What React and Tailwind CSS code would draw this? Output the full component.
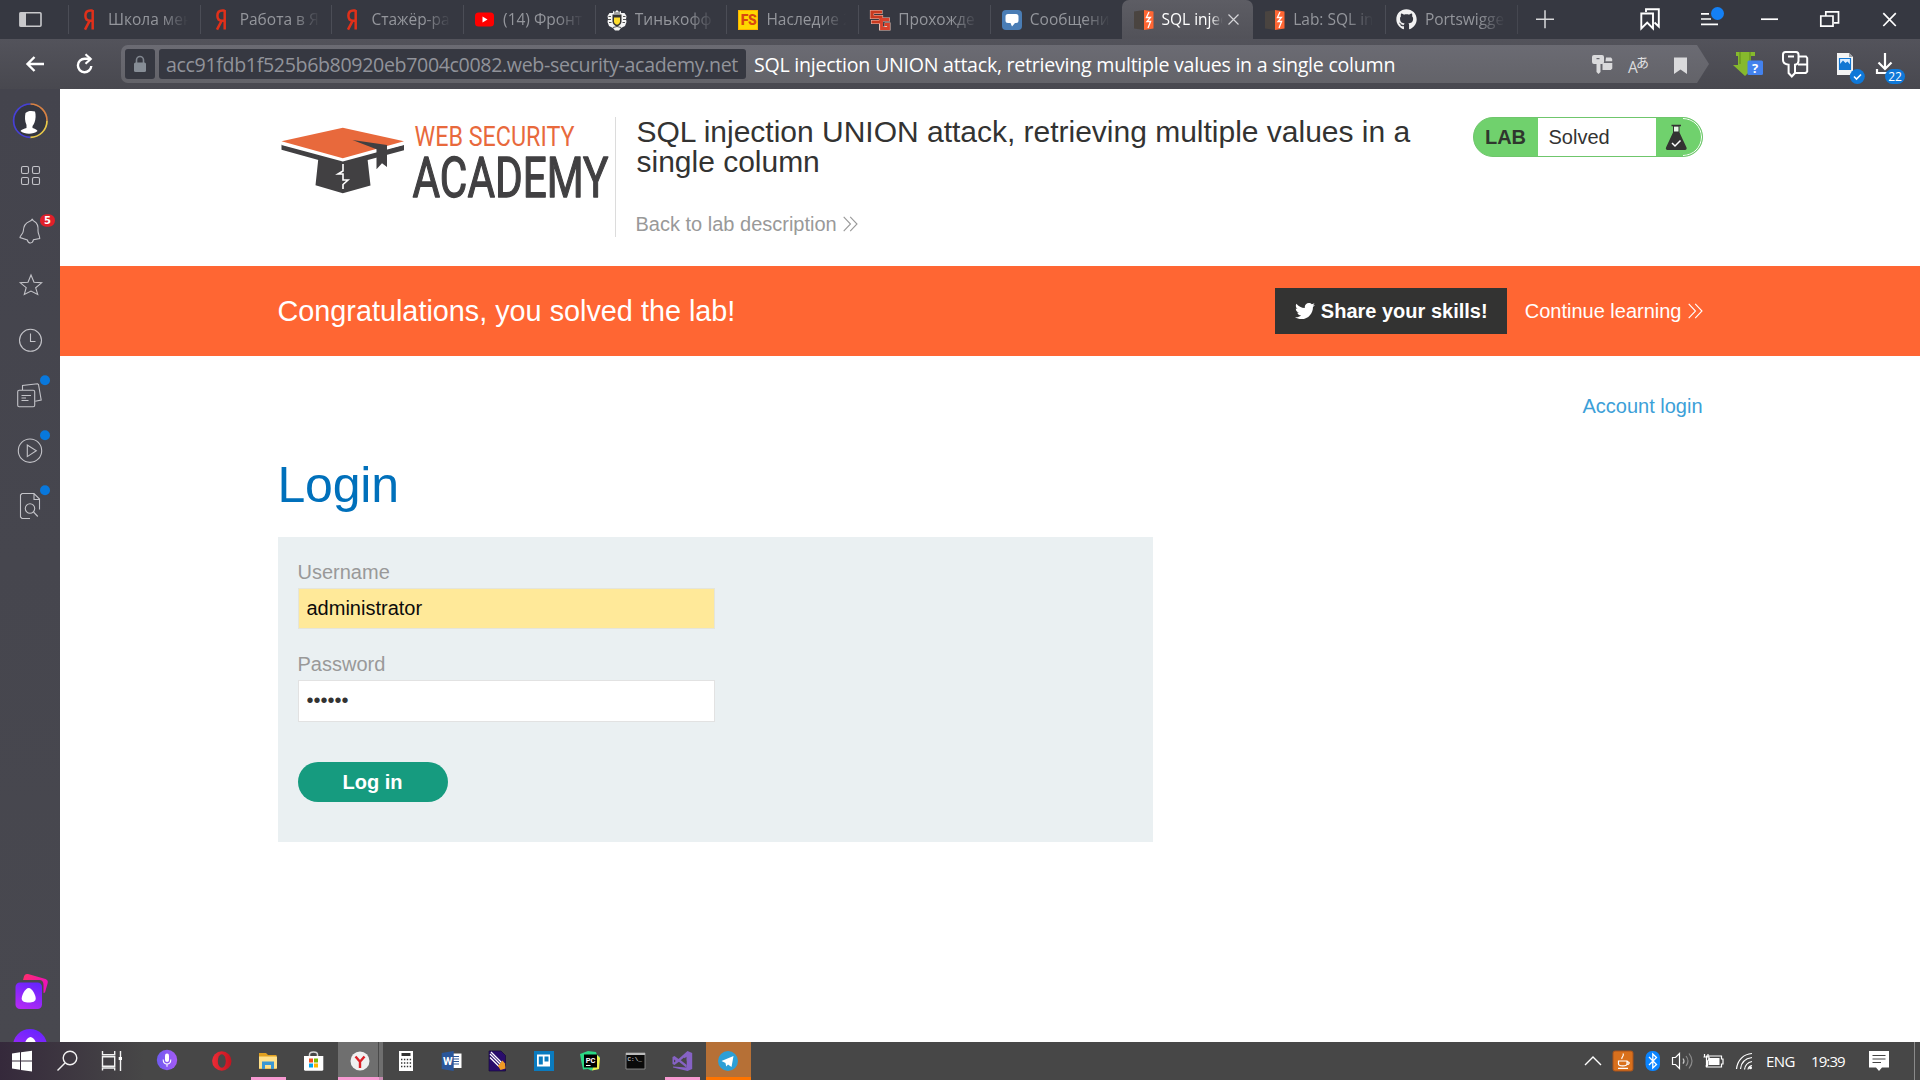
import React from "react";
import { FaTwitter, FaGithub } from "react-icons/fa";

/* ---------- tab icons ---------- */

const Ya = () => (
  <svg width="22" height="22" viewBox="0 0 22 22" fill="none" stroke="#e0301a" strokeWidth="2.5">
    <path d="M13.700 1v19.600M13.700 1.600h-2.300C8.300 1.600 6.400 3.600 6.400 6.800s1.900 5 4.600 5h2.700M10.600 11.800 6 20.600" />
  </svg>
);

const YouTube = () => (
  <svg width="22" height="22" viewBox="0 0 22 22">
    <rect x="1" y="3.5" width="19" height="14" rx="3.5" fill="#f00" />
    <path d="M8.5 7.5v6l5-3z" fill="#fff" />
  </svg>
);

const Tinkoff = () => (
  <svg width="22" height="22" viewBox="0 0 22 22">
    <path d="M7 2l2 1 2-2 2 2 2-1v2h3.500l2 3-.5 3 .5 3-1.500 4-4 2-2 2.500h-4L7 19l-4-2-1.500-4 .5-3-.5-3 2-3H7z" fill="#f4f4f4" />
    <path d="M2.500 7.500h2.500M2 10.500h3M3 13.500h2.500M17 7.500h2.500M17 10.500h3M16.500 13.500H19M7 18.500l4-1 4 1M8 4h6" stroke="#555" strokeWidth="1" fill="none" />
    <path d="M6.500 5.500h9v7c0 2.500-2 4-4.500 5-2.500-1-4.500-2.500-4.500-5z" fill="#333" />
    <path d="M8 8.500h6v4c0 1.500-1.200 2.500-3 3.300-1.800-.8-3-1.800-3-3.300z" fill="#ffdd2d" />
  </svg>
);

const FS = () => (
  <div className="flex h-5 w-5 items-center justify-center border border-[#ffb400] bg-[#ffd800] font-['Roboto',sans-serif] text-[14px] leading-none font-black tracking-[-0.5px] text-[#d9480f]">
    FS
  </div>
);

const SG = () => (
  <svg width="22" height="22" viewBox="0 0 22 22" fill="none">
    <path d="M13.500 3H3v5h9v5H2" stroke="#e9c4b8" strokeWidth="4.200" />
    <path d="M21 10.500h-9v9h7.500v-4h-4" stroke="#e9c4b8" strokeWidth="4" />
    <path d="M13 3H3v5h9v5H2.500" stroke="#c8391f" strokeWidth="3.200" />
    <path d="M20.500 10.500h-8v9h7v-4h-4" stroke="#d8402a" strokeWidth="2.800" />
  </svg>
);

const Messages = () => (
  <svg width="22" height="22" viewBox="0 0 22 22">
    <rect x="1" y="1" width="20" height="20" rx="4" fill="#4a7db5" />
    <path d="M7 5h8a2.500 2.500 0 0 1 2.500 2.500v4A2.500 2.500 0 0 1 15 14h-1l-3 3.500L9.500 14H7a2.500 2.500 0 0 1-2.500-2.500v-4A2.500 2.500 0 0 1 7 5z" fill="#fff" />
  </svg>
);

const Burp = () => (
  <svg width="22" height="22" viewBox="0 0 22 22">
    <path d="M1 2.500 11 1v20L1 19.500z" fill="#4a4440" />
    <path d="M11 1l9.500 1.500v17L11 21z" fill="#ff6633" />
    <path d="M16 3l-2.600 5.500h4L14 12.500h3.600L15 19" fill="none" stroke="#fff" strokeWidth="1.300" />
  </svg>
);

const TABS = [
  { label: "Школа мен", icon: <Ya /> },
  { label: "Работа в Я", icon: <Ya /> },
  { label: "Стажёр-ра", icon: <Ya /> },
  { label: "(14) Фронт", icon: <YouTube /> },
  { label: "Тинькофф", icon: <Tinkoff /> },
  { label: "Наследие 2", icon: <FS /> },
  { label: "Прохожде", icon: <SG /> },
  { label: "Сообщени", icon: <Messages /> },
  { label: "SQL injec", icon: <Burp />, active: true },
  { label: "Lab: SQL in", icon: <Burp /> },
  { label: "Portswigge", icon: <FaGithub size={21} color="#f2f2f2" /> },
];

function Tab({ tab, next }) {
  if (tab.active) {
    return (
      <div className="flex h-[39px] w-[131.7px] shrink-0 items-center rounded-t-[7px] bg-linear-to-b from-[#5d5d64] to-[#525259] pl-[11px]">
        <div className="flex w-[22px] justify-center">{tab.icon}</div>
        <div className="ml-[7px] w-[62px] overflow-hidden text-[15.500px] whitespace-nowrap text-white [mask-image:linear-gradient(to_right,black_78%,transparent_98%)]">
          {tab.label}
        </div>
        <svg className="ml-[4px] shrink-0" width="11" height="11" viewBox="0 0 11 11" stroke="#d5d5d8" strokeWidth="1.200">
          <path d="M.5.5l10 10M10.500.5l-10 10" />
        </svg>
      </div>
    );
  }
  return (
    <div className="flex h-[39px] w-[131.7px] shrink-0 items-center">
      <div className={next ? "h-[29px] w-px" : "h-[29px] w-px bg-[#4b4d56]"} />
      <div className="ml-[10px] flex w-[22px] justify-center">{tab.icon}</div>
      <div className="ml-[7px] w-[82px] overflow-hidden text-[15.500px] whitespace-nowrap text-[#94969c] [mask-image:linear-gradient(to_right,black_65%,transparent_98%)]">
        {tab.label}
      </div>
    </div>
  );
}

function TabBar() {
  return (
    <div className="flex h-[39px] bg-[#363841]">
      <svg className="shrink-0" width="68" height="39" viewBox="0 0 68 39">
        <rect x="20" y="12.800" width="21" height="13.500" rx="1" fill="none" stroke="#c9c9cc" strokeWidth="1.600" />
        <rect x="19.500" y="12.500" width="6.500" height="14" fill="#c9c9cc" />
      </svg>
      {TABS.map((t, i) => (
        <Tab key={t.label} tab={t} next={i > 0 && TABS[i - 1].active} />
      ))}
      <svg className="shrink-0" width="403" height="39" viewBox="1517 0 403 39" fill="none" stroke="#fff" strokeWidth="1.700">
        <path d="M1517 5v29" stroke="#4b4d56" strokeWidth="1.500" />
        <path d="M1536 19.200h18M1545 10.200v18" stroke="#d8d8da" strokeWidth="1.500" />
        <path d="M1646 12V9.300h12.800v17.200l-4.300-4" strokeWidth="1.900" />
        <path d="M1641.300 13.500h11.700v15l-5.800-6-5.900 6z" strokeWidth="1.900" />
        <path d="M1701 13.800h8M1701 19h10M1701 24.300h17" />
        <circle cx="1717.500" cy="13.500" r="6.500" fill="#1480f5" stroke="none" />
        <path d="M1761 19.200h17" />
        <path d="M1825.800 15.500v-3.700h12.700v11h-4.500M1820.800 16h12.200v10.200h-12.200z" />
        <path d="M1883.300 13.200l12.500 12.800M1895.800 13.200l-12.500 12.800" />
      </svg>
    </div>
  );
}

/* ---------- toolbar ---------- */

function Toolbar() {
  return (
    <div className="flex h-[50px] items-start bg-linear-to-b from-[#53535b] to-[#48484f]">
      <svg className="shrink-0" width="121" height="50" viewBox="0 39 121 50" fill="none" stroke="#fff" strokeWidth="2.400">
        <path d="M27.500 64H44M34.500 57l-7 7 7 7" />
        <path d="M91.300 66a6.700 6.700 0 1 1-6.700-7.200h6" />
        <path d="M85.500 54.300l5.200 4.700-5.200 4.800" strokeWidth="2.200" />
      </svg>
      <div className="mt-[6px] flex h-[38px] w-[1576px] shrink-0 items-center rounded-l-[7px] bg-linear-to-b from-[#6b6b73] to-[#636369] pl-1">
        <div className="flex h-[30px] w-[30px] items-center justify-center rounded-[3px] bg-[#363841]">
          <svg width="14" height="18" viewBox="0 0 14 18">
            <path d="M3.500 8V5a3.500 3.500 0 0 1 7 0v3" fill="none" stroke="#80868f" strokeWidth="1.600" />
            <rect x="1" y="7.500" width="12" height="9.500" rx="1.500" fill="#868d96" />
          </svg>
        </div>
        <div className="ml-1 flex h-[30px] w-[587px] items-center rounded-[3px] bg-[#363841] pt-[2px] pl-[7px] text-[19.600px] tracking-[-0.350px] whitespace-nowrap text-[#91939a]">
          acc91fdb1f525b6b80920eb7004c0082.web-security-academy.net
        </div>
        <div className="ml-2 pt-[2px] text-[19.600px] tracking-[-0.250px] whitespace-nowrap text-white">
          SQL injection UNION attack, retrieving multiple values in a single column
        </div>
      </div>
      <svg className="-ml-[117px] mt-[6px] shrink-0" width="129" height="38" viewBox="1580 45 129 38">
        <defs>
          <linearGradient id="bar" x1="0" y1="0" x2="0" y2="1">
            <stop offset="0" stopColor="#6b6b73" />
            <stop offset="1" stopColor="#636369" />
          </linearGradient>
        </defs>
        <path d="M1696.500 45h.5l12 19-12 19h-.5z" fill="url(#bar)" />
        <g fill="#dadadc">
          <path d="M1594 55h8a2 2 0 0 1 2 2v5a2 2 0 0 1-2 2h-1.500v8l-2 2-2-2v-8h-2.500a2 2 0 0 1-2-2v-5a2 2 0 0 1 2-2z" />
          <path d="M1606 57.500h5l1.200 1.500v2.300h-6.700zM1602.500 63h9.800v5.500l-1.500 1.500h-8.300z" />
          <path d="M1596.500 58h3v1.200h-3z" fill="#66666d" />
          <path d="M1674 57.500h13v16.500l-6.500-4.500-6.500 4.500z" />
        </g>
        <text x="1628" y="73.300" fontSize="15.500" fontFamily="Open Sans, sans-serif" fill="#dadadc">A</text>
        <text x="1636" y="66.500" fontSize="13" fontFamily="Noto Sans CJK JP, sans-serif" fill="#e2e2e4">あ</text>
      </svg>
      <svg className="shrink-0" width="211" height="50" viewBox="1709 39 211 50" fill="none">
        <path d="M1736 52h19v4h-4v9h5l-11 11-12-11h5v-9h-2z" fill="#86b92d" />
        <path d="M1740 52v12M1750 52v10" stroke="#5f8b1b" strokeWidth="1" />
        <rect x="1747.500" y="60.500" width="15.500" height="14.500" rx="1.500" fill="#4382ee" />
        <text x="1755.200" y="73" textAnchor="middle" fontSize="13" fontWeight="700" fontFamily="Open Sans, sans-serif" fill="#fff">?</text>
        <g stroke="#fff" strokeWidth="2">
          <path d="M1785.500 52h10.500a2.500 2.500 0 0 1 2.500 2.500v6.500a4 4 0 0 1-3.500 3.700V73l-3.200 3.500-3.200-3.500v-8.300c-3.500-.4-5.600-1.700-5.600-4.700v-5.500a2.500 2.500 0 0 1 2.500-2.500z" />
          <path d="M1788 56.500h6" />
          <path d="M1798.500 56.500h7.500l1.200 1.500v13.500l-1.500 1.500H1795M1798 64.500h9" />
        </g>
        <path d="M1837 53h12l4 4v18h-16z" fill="#f4f4f4" />
        <path d="M1849 53l4 4h-4z" fill="#9fa3a8" />
        <rect x="1839.500" y="58.500" width="11" height="11" fill="#d9ecff" />
        <path d="M1839.500 69.500v-5l3.500-4 2.500 2.500 2-1.500 3 3.500v4.500z" fill="#1277d3" />
        <path d="M1839.500 58.500h11v11h-11z" stroke="#1277d3" strokeWidth="1.200" />
        <circle cx="1857.300" cy="76.500" r="7.500" fill="#0f78d8" />
        <path d="M1854 76.500l2.500 2.500 4.500-4.500" stroke="#fff" strokeWidth="1.600" />
        <path d="M1885 53v15M1878.500 62.500l6.500 6.500 6.500-6.500" stroke="#fff" strokeWidth="2.200" />
        <path d="M1877 69v4h11" stroke="#fff" strokeWidth="2.200" />
        <rect x="1885" y="69" width="20" height="15" rx="7.500" fill="#0f78d8" />
        <text x="1895" y="80.700" textAnchor="middle" fontSize="12" fontFamily="Open Sans, sans-serif" fill="#fff">22</text>
      </svg>
    </div>
  );
}

/* ---------- side rail ---------- */

const dot = (cy) => <circle cx="45" cy={cy} r="5" fill="#0878dc" stroke="none" />;

const RAIL = [
  <g key="avatar" strokeWidth="1.700">
    <circle cx="30.300" cy="120.700" r="16" fill="#343640" stroke="none" />
    <path d="M30.300 104a16.700 16.700 0 0 1 16.700 16.700" stroke="#d98243" />
    <path d="M47 120.700a16.700 16.700 0 0 1-16.700 16.700" stroke="#e8c94a" />
    <path d="M30.300 137.400a16.700 16.700 0 0 1 0-33.400" stroke="#4640d6" />
    <path d="M25.500 113c2-2.500 7-2.500 9.500-1.500 1 3 .8 8-.5 11-.7 1.800-1.500 3-2 3.500v2c2 .8 4.500 1.500 5 3-4 3.500-13 3.500-17 0 .8-1.600 4-2.200 6-3v-3c-1.800-4-1.800-8-1-12z" fill="#fff" stroke="none" />
  </g>,
  <g key="apps">
    <rect x="21.500" y="166.500" width="7" height="7" rx="1.500" />
    <rect x="32.500" y="166.500" width="7" height="7" rx="1.500" />
    <rect x="21.500" y="177.500" width="7" height="7" rx="1.500" />
    <rect x="32.500" y="177.500" width="7" height="7" rx="1.500" />
  </g>,
  <g key="bell">
    <path d="M32.500 218.800c-.3 1.600.6 2 2 2.700 3.200 1.800 3.800 5 3.500 9 0 3.500 1.600 4.500 1.700 8l-6.200 1.200c-.8 4-5 4.500-6.200.3l-7.300-2.500c0-2.500 3-3 3.300-6.500.3-4.500 1.700-8 6-9.500 1.700-.4 2.500-1.200 3.200-2.700z" />
    <rect x="40" y="214.200" width="15" height="12.500" rx="6.200" fill="#e0202a" stroke="none" />
    <text x="47.500" y="224.200" textAnchor="middle" fontSize="10" fontWeight="700" fontFamily="DejaVu Sans, sans-serif" fill="#fff" stroke="none">5</text>
  </g>,
  <path key="star" d="M31 275l3 7.300 7.600.5-5.900 5 2 6.600-6.700-3.400-6.700 3.400 1.900-6.700-5.900-4.900 7.700-.5z" />,
  <g key="clock">
    <circle cx="30.500" cy="340.300" r="11" />
    <path d="M30.500 333.500v8h5" />
  </g>,
  <g key="notes">
    <rect x="17.700" y="390.200" width="17" height="16.500" rx="1.500" />
    <path d="M22.500 390v-4.500l15-1.800 1 .8 2.700 15.500-6 1.300M21.500 395.500h9.500M21.500 398h4.500M21.500 400.500h7" />
    {dot(380.300)}
  </g>,
  <g key="play">
    <circle cx="30" cy="450.700" r="11.700" />
    <path d="M27.300 445v11.600l9-5.800z" />
    {dot(435.300)}
  </g>,
  <g key="search">
    <path d="M30 518.500h-8l-1.500-1.500v-22l1.500-1.500h12l5.500 5.500v10.500M34 493.500v6h5.500" />
    <circle cx="30" cy="508.500" r="4.700" />
    <path d="M33.500 512l4.300 4.500" />
    {dot(490.300)}
  </g>,
];

const RAIL_VIEW = ["0 93 60 55", "0 148 60 55", "0 203 60 55", "0 258 60 55", "0 313 60 55", "0 368 60 55", "0 423 60 55", "0 478 60 55"];

function SideRail() {
  return (
    <div className="flex w-[60px] shrink-0 flex-col bg-linear-to-b from-[#44444d] to-[#48484f] pt-[4px]">
      {RAIL.map((g, i) => (
        <svg key={i} className="shrink-0" width="60" height="55" viewBox={RAIL_VIEW[i]} fill="none" stroke="#c3c3c8" strokeWidth="1.100">
          {g}
        </svg>
      ))}
      <svg className="mt-auto shrink-0" width="60" height="82" viewBox="0 960 60 82">
        <defs>
          <linearGradient id="alice" x1="0.800" y1="0" x2="0.400" y2="1">
            <stop offset="0" stopColor="#6424ff" />
            <stop offset="1" stopColor="#b02af5" />
          </linearGradient>
          <linearGradient id="card" x1="0" y1="0" x2="1" y2="0.300">
            <stop offset="0" stopColor="#ff2f68" />
            <stop offset="1" stopColor="#ee10b8" />
          </linearGradient>
        </defs>
        <path d="M23 980l1-3.500c.6-2 2-3 4-2.400l17.500 5c1.800.7 2.700 2 2.200 4l-2.700 9.500-1.500.4v-8c0-3.500-1.500-5-4-5z" fill="url(#card)" />
        <rect x="15.500" y="982.500" width="26.500" height="26.500" rx="4.500" fill="url(#alice)" />
        <path d="M28.700 988c3.500 0 7 7 7 10.500 0 3-3 4-7 4s-7-1-7-4c0-3.500 3.500-10.500 7-10.500z" fill="#fff" />
        <circle cx="30" cy="1046" r="17" fill="url(#alice)" />
        <path d="M30.500 1037c3 0 6 5 6 9h-12c0-4 3-9 6-9z" fill="#fff" />
      </svg>
    </div>
  );
}

/* ---------- page ---------- */

const Chevrons = ({ color }) => (
  <svg className="shrink-0" width="15" height="16" viewBox="0 0 15 16" fill="none" stroke={color} strokeWidth="1.100">
    <path d="M.7.8 7.500 8 .7 15.200M7.200.8 14 8l-6.800 7.200" />
  </svg>
);

const Logo = () => (
  <svg className="shrink-0" width="337" height="120" viewBox="278 117 337 120" role="img" aria-label="Web Security Academy">
    <path d="M281.500 144.500v5.200l61.300 17 61.200-16.500v-5.500l-61.200 15z" fill="#414042" />
    <path d="M318.500 157l24.300 4.500 24.500-4.500 3.200 28.500-27.700 7.800-27.300-8z" fill="#414042" />
    <path d="M281.500 145l61.300 16.500L404 145v-3l-61.200 14-61.300-14z" fill="#fff" />
    <path d="M281.500 141.200l61.300-13.500 61.200 13.500-61.200 17z" fill="#e8693c" />
    <path d="M352.500 140l34.500 5v22l-5-3.700-5.500 6v-20z" fill="#414042" />
    <path d="M343 164v7l-5 3h5v6l5 0-5 4.500v4.500" fill="none" stroke="#fff" strokeWidth="1.600" />
    <text x="414.500" y="146" fontSize="28" fontWeight="400" fontFamily="Roboto, sans-serif" fill="#e8693c" strokeLinejoin="round" textLength="160" lengthAdjust="spacingAndGlyphs">WEB SECURITY</text>
    <text x="412.500" y="196.500" fontSize="55" fontWeight="400" fontFamily="Roboto, sans-serif" fill="#414042" stroke="#414042" strokeWidth="1.300" strokeLinejoin="round" textLength="196" lengthAdjust="spacingAndGlyphs">ACADEMY</text>
  </svg>
);

function LabHeader() {
  return (
    <div className="h-[177px] bg-white">
      <div className="mx-auto flex w-[1425px] pt-[28px]">
        <Logo />
        <div className="h-[120px] w-px bg-[#dcdcdc]" />
        <div className="ml-[20px] w-[790px]">
          <h2 className="pl-px text-[30px] leading-[30px] tracking-[-0.010px] text-[#333332]">
            SQL injection UNION attack, retrieving multiple values in a<br />single column
          </h2>
          <a className="mt-[35px] flex items-center gap-[6px] text-[20px] leading-6 text-[#999]">
            Back to lab description
            <Chevrons color="#999" />
          </a>
        </div>
        <div className="ml-auto flex h-10 w-[230px] overflow-hidden rounded-full border border-[#6fc66c] bg-[#70d16d]">
          <div className="flex w-16 items-center justify-center text-[20px] font-bold text-[#2f372d]">LAB</div>
          <div className="flex w-[118px] items-center bg-white pl-[11px] text-[20px] text-[#333332]">Solved</div>
          <svg width="46" height="38" viewBox="1656 118 46 38">
            <path d="M1683 118.500a18.500 18.500 0 0 1 0 37" fill="none" stroke="#fff" strokeWidth="1" />
            <path d="M1673 126h6.500v6.500l7 15c.5 1.500-.2 2.500-1.500 2.500h-17.500c-1.300 0-2-1-1.500-2.500l7-15z" fill="#333332" />
            <path d="M1674 126.500h4.500v5h-4.500z" fill="#e6f7e5" />
            <path d="M1671.500 125.500h9.500" stroke="#333332" strokeWidth="1.300" />
            <path d="M1672 143l3 3 5.500-5.500" fill="none" stroke="#fff" strokeWidth="1.500" />
          </svg>
        </div>
      </div>
    </div>
  );
}

function Banner() {
  return (
    <div className="h-[90px] bg-[#ff6633]">
      <div className="mx-auto flex h-full w-[1425px] items-center text-white">
        <p className="pt-[2px] text-[28.800px]">Congratulations, you solved the lab!</p>
        <button className="ml-auto flex h-[46px] w-[232px] items-center justify-center gap-[6px] bg-[#333332] pl-px text-[20px] font-bold">
          <FaTwitter size={20} />
          <span>Share your skills!</span>
        </button>
        <a className="ml-[18px] flex items-center gap-[6px] text-[20px]">
          Continue learning
          <Chevrons color="#ffffff" />
        </a>
      </div>
    </div>
  );
}

function LoginSection() {
  return (
    <div className="mx-auto w-[1425px] pt-[38px]">
      <div className="text-right text-[20px] leading-6 text-[#3ca0d8]">Account login</div>
      <h1 className="mt-[37px] text-[50px] leading-[60px] tracking-[-0.200px] text-[#0070bb]">Login</h1>
      <form className="mt-[22px] flex h-[305px] w-[875px] flex-col items-start bg-[#eaf0f2] px-5 pt-[23px] text-[20px]">
        <label className="leading-6 text-[#999]">Username</label>
        <input readOnly type="text" defaultValue="administrator" className="mt-1 h-[41px] w-[417px] border border-[#e5e5da] bg-[#ffe999] px-2 text-[#0b0b0b] outline-none" />
        <label className="mt-[23px] leading-6 text-[#999]">Password</label>
        <input readOnly type="password" defaultValue="secret" className="mt-1 h-[42px] w-[417px] border border-[#e2e2e2] bg-white px-2 pb-px text-[#333332] outline-none" />
        <button type="button" className="mt-10 h-10 w-[150px] rounded-full bg-[#169b7f] font-bold text-white">Log in</button>
      </form>
    </div>
  );
}

/* ---------- taskbar ---------- */

const PINK = "#f799d1";

function Taskbar() {
  return (
    <div className="flex h-[38px] shrink-0 bg-[#474747]">
      <svg className="shrink-0" width="144" height="38" viewBox="0 1042 144 38">
        <defs>
          <linearGradient id="edge">
            <stop offset="0" stopColor="#35293b" />
            <stop offset="1" stopColor="#474747" />
          </linearGradient>
        </defs>
        <rect x="0" y="1042" width="144" height="38" fill="url(#edge)" />
        <path d="M12 1053.500l8-1.200v8.200h-8zM21 1052.200l11-1.500v9.800H21zM12 1061.500h8v8.200l-8-1.200zM21 1061.500h11v10l-11-1.600z" fill="#fff" />
        <g fill="none" stroke="#f2f2f2" strokeWidth="1.400">
          <circle cx="70" cy="1058" r="6.800" />
          <path d="M65 1063l-7.500 7.500" />
          <path d="M102.500 1051v3.700h12.200V1051M102.500 1056.700h12.200v9.600h-12.200zM102.500 1070.500v-2.500h12.200v2.500M120.500 1051v20" />
        </g>
        <path d="M118.700 1057h3.300v3h-3.300z" fill="#fff" />
      </svg>
      <svg className="shrink-0" width="107" height="38" viewBox="144 1042 107 38">
        <defs>
          <linearGradient id="mic"><stop offset="0" stopColor="#6f5bf0" /><stop offset="1" stopColor="#a55bf5" /></linearGradient>
          <linearGradient id="opera"><stop offset="0" stopColor="#ee2c36" /><stop offset="1" stopColor="#c31420" /></linearGradient>
        </defs>
        <circle cx="167" cy="1060" r="10.200" fill="url(#mic)" />
        <rect x="165" y="1053.500" width="4" height="8.500" rx="2" fill="#fff" />
        <path d="M163.200 1059.500c0 6 7.600 6 7.600 0M167 1064v2.700" fill="none" stroke="#fff" strokeWidth="1.100" />
        <circle cx="221.800" cy="1061" r="9.700" fill="url(#opera)" />
        <ellipse cx="221.800" cy="1061" rx="4" ry="6.700" fill="#474747" />
      </svg>
      <svg className="shrink-0" width="87" height="38" viewBox="251 1042 87 38">
        <path d="M259 1053h7l2 2h8.500v14H259z" fill="#e0a020" />
        <path d="M259 1056.500h18v12h-18z" fill="#ffe08a" />
        <path d="M262 1069v-7.500h12v7.500h-3v-4h-6v4z" fill="#3b97d3" />
        <rect x="251" y="1077" width="35" height="3" fill={PINK} />
        <path d="M309.500 1057v-2.500c0-3.500 8-3.500 8 0v2.500" fill="none" stroke="#d6d6d6" strokeWidth="1.500" />
        <path d="M304 1056h19.300v14l-1 .7h-17.300l-1-.7z" fill="#fff" />
        <path d="M309 1058.500h4v4h-4z" fill="#f25022" />
        <path d="M314 1058.500h4v4h-4z" fill="#7fba00" />
        <path d="M309 1063.500h4v4h-4z" fill="#00a4ef" />
        <path d="M314 1063.500h4v4h-4z" fill="#ffb900" />
      </svg>
      <svg className="shrink-0" width="45" height="38" viewBox="338 1042 45 38">
        <rect x="338" y="1042" width="45" height="38" fill="#6f6f6f" />
        <path d="M378.500 1042v35" stroke="#4a4a4a" />
        <rect x="338" y="1077" width="45" height="3" fill={PINK} />
        <rect x="379" y="1077" width="4" height="3" fill="#c98bb2" />
        <circle cx="360" cy="1061" r="9.500" fill="#f0f0f0" />
        <path d="M355.500 1056.500l4.500 5.200 4.500-5.200M360 1061.500v6.500" fill="none" stroke="#dc1f26" strokeWidth="2.400" />
      </svg>
      <svg className="shrink-0" width="282" height="38" viewBox="383 1042 282 38">
        <path d="M399 1051h14v20h-14z" fill="#fff" />
        <path d="M401.500 1053h9v3h-9z" fill="#333" />
        <path d="M401 1059.500h10.500M401 1063h10.500M401 1066.500h10.500" stroke="#333" strokeWidth="1.300" strokeDasharray="1.400 1.500" />
        <path d="M450 1053.500h11.500v14.500H450z" fill="#fff" />
        <path d="M453 1056.500h6M453 1059h6M453 1061.500h6M453 1064h6" stroke="#2a569a" />
        <path d="M441.700 1053l12-2v20l-12-2z" fill="#2a569a" />
        <text x="447.800" y="1065" textAnchor="middle" fontSize="11" fontWeight="700" fontFamily="Roboto, sans-serif" fill="#fff">W</text>
        <path d="M489 1051h12l4.500 4.500v15.500H489z" fill="#2a0d6b" stroke="#15083a" strokeWidth=".7" />
        <path d="M490 1054l11 11M490 1057.500l9 9M491 1052l11 11" stroke="#fff" strokeWidth="1.300" />
        <path d="M498 1066l4.500-5.500 2.500 3 .5 5-5 1.500z" fill="#f09a25" />
        <rect x="534" y="1051" width="20" height="20" fill="#0a7bbf" />
        <path d="M537 1054.500h13v12h-13z" fill="#fff" />
        <path d="M538.800 1056.500h4v8h-4zM544.500 1056.500h4v5h-4z" fill="#0a7bbf" />
        <path d="M580 1054l8-3 8 1 1 3 3 2-2 4 1 8-8 1.500-3-1.500-5 .5-1.500-7z" fill="#2bd884" />
        <path d="M597 1055l3 3-1 11-7 1.500 2-5z" fill="#eef04e" />
        <path d="M584 1054.500h13v13h-13z" fill="#000" />
        <text x="590.500" y="1062.500" textAnchor="middle" fontSize="7.500" fontWeight="700" fontFamily="Roboto, sans-serif" fill="#fff">PC</text>
        <path d="M586 1065.500h4.500" stroke="#fff" />
        <path d="M626 1053h19v16h-19z" fill="#0a0a0a" stroke="#9a9a9a" strokeWidth=".8" />
        <path d="M626 1053h19v2h-19z" fill="#bbb" />
        <text x="627.500" y="1061" fontSize="6" fontFamily="Liberation Mono, monospace" fill="#eee">C:\_</text>
      </svg>
      <svg className="shrink-0" width="41" height="38" viewBox="665 1042 41 38">
        <path d="M687.500 1051l4.700 2v16l-4.700 2-14.500-3.500v-1l13.500 1v-6.500l-2.500-3.500-5.500 4.500-4 3-2-1v-7l2-1 4 3 9-8z" fill="#8662c5" />
        <path d="M674 1059.500v3l1.800-1.500zM686.500 1056.800l-5.500 4.200 5.500 4.200z" fill="#474747" />
        <path d="M678 1061l8.500 6.800v-3l-6-4.800z" fill="#8662c5" />
        <rect x="665" y="1077" width="35" height="3" fill={PINK} />
      </svg>
      <svg className="shrink-0" width="45" height="38" viewBox="706 1042 45 38">
        <rect x="706" y="1042" width="45" height="38" fill="#b67036" />
        <rect x="706" y="1077" width="45" height="3" fill="#ff7400" />
        <circle cx="728" cy="1061" r="10" fill="#2c9fd6" />
        <path d="M721.500 1061l12-5-2 11-3.500-2.500-1.800 2-.7-3.500z" fill="#fff" />
      </svg>
      <svg className="ml-auto shrink-0" width="182" height="38" viewBox="1578 1042 182 38" fill="none" stroke="#fff" strokeWidth="1.200">
        <path d="M1585 1065l8-8 8 8" strokeWidth="1.400" />
        <rect x="1613" y="1051" width="20" height="20" rx="2" fill="#d9701c" stroke="#a9531a" strokeWidth="1" />
        <path d="M1618.500 1061h8.500v3c0 2.500-8.500 2.500-8.500 0zM1627 1062c3.500-.5 2.500 2.500-.3 2.500M1618 1068.300h10M1622 1059c-1.500-2 3-2.500 1-5.500" strokeWidth="1.200" />
        <rect x="1645.500" y="1051" width="14.500" height="20" rx="6.500" fill="#0a84ff" stroke="none" />
        <path d="M1649 1057l7.500 7.500-3.700 3.500v-14l3.700 3.500-7.500 7.500" strokeWidth="1.300" />
        <path d="M1672.500 1057.500h3l4-4v15l-4-4h-3z" />
        <path d="M1683 1058.500c1.300 1.700 1.300 3.500 0 5.200" stroke="#c9c9c9" />
        <path d="M1686 1056c2.600 3.300 2.600 6.700 0 10M1689 1053.500c4 5 4 10 0 15" stroke="#8b8b8b" />
        <path d="M1706.500 1056h15v3h1.500v5h-1.500v3h-15z" />
        <path d="M1708.500 1058h11v7h-11z" fill="#fff" stroke="none" />
        <path d="M1704.500 1054v2.500M1708 1054v2.500M1703.500 1057h5.500v2.500l-1.500 1.500v5h-2" />
        <path d="M1736.500 1069c1-9 7-15 15.500-15.500M1740.500 1069c.5-6 4.500-10.500 11.500-11.500M1744.500 1069.500c.5-4 3-7 7.500-8M1748 1069.500c.2-1.500 1.500-3.500 4-4" />
        <circle cx="1750.500" cy="1067.700" r="1.500" fill="#fff" stroke="none" />
      </svg>
      <div className="flex w-[48px] items-center pl-[6px] text-[15px] tracking-[-0.600px] text-white">ENG</div>
      <div className="flex w-[52px] items-center pl-[3px] text-[15px] tracking-[-0.900px] text-white">19:39</div>
      <svg className="shrink-0" width="60" height="38" viewBox="1860 1042 60 38">
        <path d="M1869 1051h20v16.500h-7l-3 3.500-3-3.500h-7z" fill="#fff" />
        <path d="M1872.500 1055.500h13M1872.500 1059h13M1872.500 1062.500h8.500" stroke="#444" strokeWidth="1.200" />
        <path d="M1914.500 1042v38" stroke="#8a8a8a" />
      </svg>
    </div>
  );
}

export default function App() {
  return (
    <div className="flex h-[1080px] w-[1920px] flex-col overflow-hidden bg-white font-['Open_Sans','Noto_Sans',sans-serif]">
      <TabBar />
      <Toolbar />
      <div className="flex min-h-0 flex-1">
        <SideRail />
        <main className="flex-1 bg-white font-['Liberation_Sans',Arial,sans-serif]">
          <LabHeader />
          <Banner />
          <LoginSection />
        </main>
      </div>
      <Taskbar />
    </div>
  );
}
